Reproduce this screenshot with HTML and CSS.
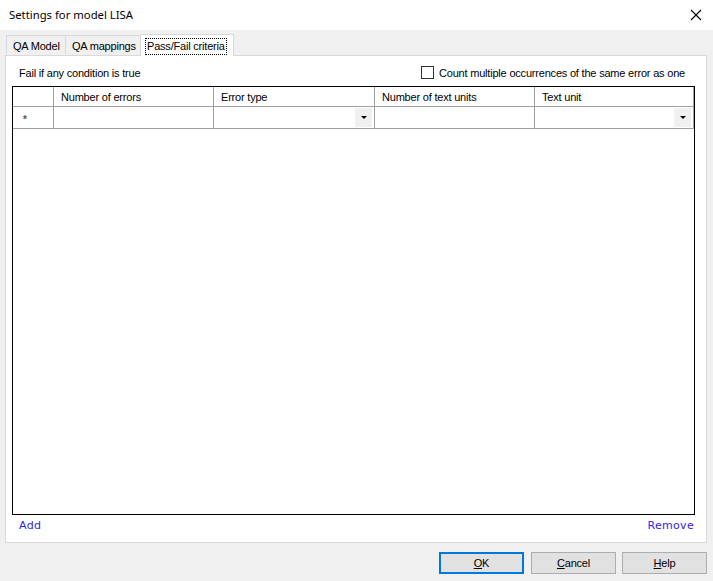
FILE: index.html
```html
<!DOCTYPE html>
<html lang="en">
<head>
    <meta charset="UTF-8">
    <title>Settings for model LISA</title>
    <link rel="stylesheet" href="styles.css">
</head>
<body>
    <div class="window">
        <div class="titlebar">
            <span class="title">Settings for model LISA</span>
            <svg class="close" width="12" height="12" viewBox="0 0 12 12">
                <path d="M1 1 L11 11 M11 1 L1 11" stroke="#000" stroke-width="1.1" fill="none"/>
            </svg>
        </div>

        <div class="tabs">
            <div class="tab tab-model">QA Model</div>
            <div class="tab tab-map">QA mappings</div>
            <div class="tab tab-active"><span class="focus">Pass/Fail criteria</span></div>
        </div>

        <div class="panel">
            <div class="panel-top">
                <span>Fail if any condition is true</span>
                <label class="check"><span class="box"></span>Count multiple occurrences of the same error as one</label>
            </div>

            <div class="grid">
                <div class="grid-row head">
                    <div class="cell rowhead"></div>
                    <div class="cell c1">Number of errors</div>
                    <div class="cell c2">Error type</div>
                    <div class="cell c3">Number of text units</div>
                    <div class="cell c4">Text unit</div>
                </div>
                <div class="grid-row newrow">
                    <div class="cell rowhead"><span class="star">*</span></div>
                    <div class="cell c1"></div>
                    <div class="cell c2"><span class="drop"></span></div>
                    <div class="cell c3"></div>
                    <div class="cell c4"><span class="drop"></span></div>
                </div>
            </div>

            <div class="links">
                <a>Add</a>
                <a>Remove</a>
            </div>
        </div>

        <div class="buttons">
            <button class="btn default"><u>O</u>K</button>
            <button class="btn"><u>C</u>ancel</button>
            <button class="btn"><u>H</u>elp</button>
        </div>
    </div>
</body>
</html>
```

FILE: styles.css
```css
body {
    margin: 0;
    background-color: #f0f0f0;
    font-family: "Liberation Sans", Arial, sans-serif;
    font-size: 11px;
    letter-spacing: -0.2px;
    color: #000;
}

.window {
    width: 713px;
    height: 581px;
    background-color: #f0f0f0;
}

.titlebar {
    height: 30px;
    background-color: #fff;
    display: flex;
    align-items: center;
    justify-content: space-between;
    padding: 0 11px 0 9px;
    box-sizing: border-box;
}

.title {
    font-family: "Noto Sans", "Open Sans", sans-serif;
    font-size: 11.3px;
    letter-spacing: 0;
    margin-top: -1px;
}

.close {
    display: block;
}

.tabs {
    display: flex;
    align-items: flex-end;
    height: 25px;
    padding-left: 6px;
    position: relative;
    z-index: 1;
}

.tab {
    height: 18px;
    line-height: 21px;
    border: 1px solid #d9d9d9;
    border-bottom: none;
    padding-left: 6px;
    background-color: #f0f0f0;
    margin-bottom: 1px;
}

.tab-model {
    width: 52px;
}

.tab-map {
    width: 68px;
    border-left: none;
}

.tab-active {
    width: 88px;
    height: 21px;
    line-height: 22px;
    margin-bottom: -1px;
    padding-left: 4px;
    background-color: #fff;
    border-left: none;
}

.focus {
    border: 1px dotted #000;
    padding: 0 1px;
    line-height: 15px;
    display: inline-block;
}

.panel {
    margin: 0 6px 0 5px;
    height: 488px;
    box-sizing: border-box;
    border: 1px solid #d9d9d9;
    background-color: #fff;
    padding: 0 11px 0 6px;
}

.panel-top {
    display: flex;
    justify-content: space-between;
    align-items: center;
    height: 30px;
    box-sizing: border-box;
    padding: 4px 10px 0 7px;
}

.check {
    display: flex;
    align-items: center;
}

.box {
    width: 11px;
    height: 11px;
    border: 1px solid #333;
    background: #fff;
    margin-right: 5px;
    margin-top: -1px;
}

.grid {
    height: 429px;
    box-sizing: border-box;
    border: 1px solid #000;
}

.grid-row {
    display: flex;
    border-bottom: 1px solid #a0a0a0;
}

.head {
    height: 19px;
}

.newrow {
    height: 21px;
}

.cell {
    box-sizing: border-box;
    border-right: 1px solid #a0a0a0;
    padding-left: 7px;
    display: flex;
    align-items: center;
    position: relative;
    flex-shrink: 0;
}

.rowhead {
    width: 41px;
    padding-left: 0;
}

.c1 {
    width: 160px;
}

.c2 {
    width: 161px;
}

.c3 {
    width: 160px;
}

.c4 {
    flex: 1;
}

.star {
    font-size: 10px;
    font-weight: bold;
    color: #555;
    margin-left: 10px;
    margin-top: 3px;
}

.drop {
    position: absolute;
    right: 2px;
    top: 1px;
    width: 17px;
    height: 19px;
    background-color: #f0f0f0;
}

.drop::after {
    content: "";
    position: absolute;
    left: 6px;
    top: 8px;
    border-left: 3px solid transparent;
    border-right: 3px solid transparent;
    border-top: 3px solid #000;
}

.links {
    display: flex;
    justify-content: space-between;
    padding: 4px 1px 0 7px;
    font-family: "DejaVu Sans", sans-serif;
    font-size: 11px;
    letter-spacing: 0.3px;
}

.links a {
    color: #3322ee;
    cursor: pointer;
}

.buttons {
    display: flex;
    justify-content: flex-end;
    gap: 6px;
    padding: 9px 6px 0 0;
}

.btn {
    width: 85px;
    height: 22px;
    background-color: #e1e1e1;
    border: 1px solid #adadad;
    font-family: "Liberation Sans", Arial, sans-serif;
    font-size: 11px;
    letter-spacing: -0.2px;
    padding: 0;
    color: #000;
}

.btn.default {
    border: 2px solid #0078d7;
    margin-right: 1px;
}
```
